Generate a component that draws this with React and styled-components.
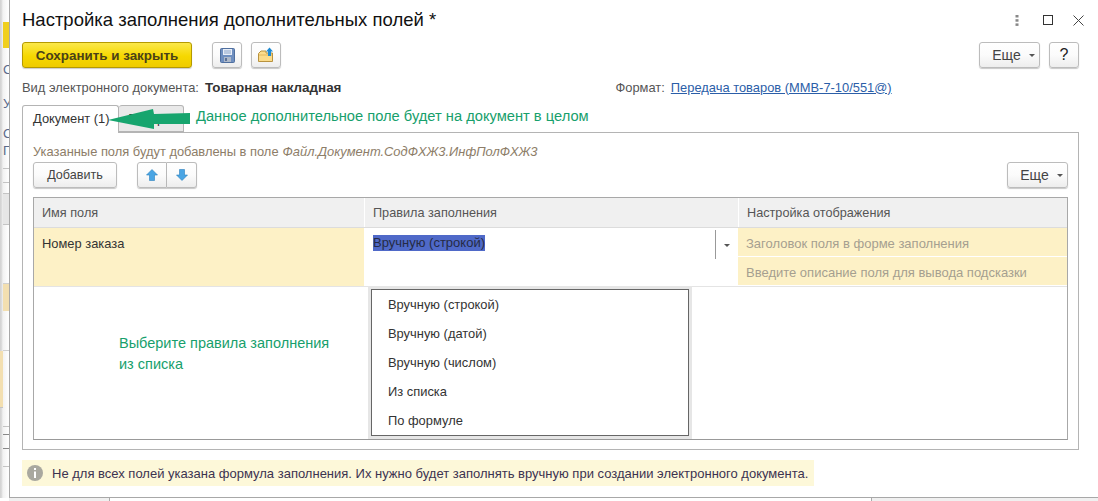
import React from "react";
import styled, { createGlobalStyle } from "styled-components";

const GlobalStyle = createGlobalStyle`
  html, body {
    margin: 0;
    padding: 0;
    background: #fff;
    overflow: hidden;
  }
  body {
    font-family: "Liberation Sans", Arial, sans-serif;
    font-size: 13px;
    color: #333;
  }
`;

const Page = styled.div`
  width: 1098px;
  height: 501px;
  display: flex;
  overflow: hidden;
  background: #fff;
`;

const Backdrop = styled.div`
  width: 9px;
  height: 498px;
  flex: none;
  overflow: hidden;
  background: linear-gradient(90deg, #d4d4d4 0, #d4d4d4 1px, #f2f2f2 3px, #fff 100%);
  display: flex;
  flex-direction: column;
`;

const BackdropBand = styled.div`
  height: ${(p) => p.$h}px;
  flex: none;
  box-sizing: border-box;
  margin-left: ${(p) => p.$ml ?? 3}px;
  margin-right: ${(p) => p.$mr ?? 0}px;
  background: ${(p) => p.$bg || "transparent"};
  border-bottom: ${(p) => (p.$line ? `1px solid ${p.$line}` : "none")};
  font-size: 13px;
  line-height: ${(p) => p.$h}px;
  color: #5a6a8a;
  overflow: hidden;
  white-space: nowrap;
`;

const Column = styled.div`
  flex: 1;
  display: flex;
  flex-direction: column;
  min-width: 0;
`;

const Window = styled.div`
  height: 498px;
  box-sizing: border-box;
  flex: none;
  background: #fff;
  border-left: 1px solid #a8a8a8;
  border-bottom: 1px solid #a8a8a8;
  padding: 0 19px 0 12px;
  display: flex;
  flex-direction: column;
  position: relative;
`;

const BottomStrip = styled.div`
  flex: 1;
  display: flex;
`;

const StripCell = styled.div`
  width: ${(p) => p.$w}px;
  flex: ${(p) => (p.$w ? "none" : 1)};
  background: ${(p) => p.$bg};
  border-right: ${(p) => (p.$w ? "1px solid #aaa" : "none")};
`;

const TitleBar = styled.div`
  height: 42px;
  display: flex;
  align-items: center;
  justify-content: space-between;
  flex: none;
  box-sizing: border-box;
  padding-bottom: 2px;
`;

const Title = styled.h1`
  margin: 0;
  font-size: 18.5px;
  font-weight: normal;
  color: #111;
  white-space: nowrap;
`;

const WindowControls = styled.div`
  display: flex;
  align-items: center;
  gap: 20px;
  margin-right: -5px;
`;

const DotsSlot = styled.span`
  display: flex;
  margin-right: 4px;
`;

const Toolbar = styled.div`
  display: flex;
  align-items: center;
  height: 26px;
  flex: none;
`;

const PrimaryButton = styled.button`
  width: 170px;
  height: 26px;
  box-sizing: border-box;
  border: 1px solid #b59a00;
  border-radius: 3px;
  background: linear-gradient(180deg, #fbe84a 0%, #f6d800 55%, #efcb00 100%);
  box-shadow: 0 1px 1px rgba(0, 0, 0, 0.2);
  color: #4a4118;
  font: bold 13.4px "Liberation Sans", Arial, sans-serif;
  padding: 0;
`;

const Button = styled.button`
  width: ${(p) => p.$w}px;
  height: 26px;
  box-sizing: border-box;
  flex: none;
  margin-left: ${(p) => p.$ml || 0}px;
  border: 1px solid #bcbcbc;
  border-radius: 3px;
  background: linear-gradient(180deg, #fff 0%, #fbfbfb 50%, #ededed 100%);
  box-shadow: 0 1px 1px rgba(0, 0, 0, 0.22);
  color: #444;
  font: 12.6px "Liberation Sans", Arial, sans-serif;
  padding: 0;
  display: flex;
  align-items: center;
  justify-content: center;
`;

const MoreButton = styled(Button)`
  font-size: 14px;
  padding-left: 8px;
  gap: 8px;
`;

const HelpButton = styled(Button)`
  font-size: 16px;
  color: #222;
`;

const Caret = styled.span`
  width: 0;
  height: 0;
  border-left: 3px solid transparent;
  border-right: 3px solid transparent;
  border-top: 3px solid #555;
  margin-top: 1px;
`;

const Spacer = styled.div`
  flex: 1;
`;

const InfoRow = styled.div`
  height: 37px;
  flex: none;
  display: flex;
  align-items: center;
  font-size: 12.9px;
  color: #555;
  padding-top: 1px;
  box-sizing: border-box;
  white-space: nowrap;
`;

const InfoValue = styled.b`
  color: #333;
  margin-left: 6px;
  font-size: 13.4px;
`;

const FormatBlock = styled.div`
  margin-left: 274px;
  display: flex;
  gap: 6px;
`;

const FormatLink = styled.a`
  color: #2b5ea8;
  text-decoration: underline;
`;

const TabStrip = styled.div`
  display: flex;
  height: 27px;
  flex: none;
  position: relative;
`;

const Tab = styled.div`
  width: ${(p) => p.$w}px;
  box-sizing: border-box;
  height: ${(p) => (p.$active ? 28 : 27)}px;
  border: 1px solid #b4b4b4;
  border-bottom: ${(p) => (p.$active ? "none" : "1px solid #b4b4b4")};
  border-left: ${(p) => (p.$active ? "1px solid #b4b4b4" : "none")};
  border-radius: 3px 3px 0 0;
  background: ${(p) => (p.$active ? "#fff" : "#e9e9e9")};
  padding: 5px 0 0 10px;
  font-size: 12.9px;
  color: #333;
  white-space: nowrap;
  overflow: hidden;
  z-index: ${(p) => (p.$active ? 1 : 0)};
`;

const Panel = styled.div`
  height: 318px;
  box-sizing: border-box;
  flex: none;
  border: 1px solid #b4b4b4;
  padding: 0 10px 9px 10px;
  display: flex;
  flex-direction: column;
  position: relative;
`;

const HintText = styled.div`
  height: 29px;
  flex: none;
  display: flex;
  align-items: center;
  gap: 4px;
  font-size: 12.9px;
  color: #8d7d68;
  white-space: nowrap;
  padding-top: 7px;
  box-sizing: border-box;
`;

const HintCode = styled.i`
  font-style: italic;
`;

const PanelToolbar = styled.div`
  display: flex;
  height: 26px;
  flex: none;
  align-items: center;
`;

const ArrowGroup = styled.div`
  display: flex;
  margin-left: 20px;
  height: 26px;
`;

const ArrowButton = styled(Button)`
  border-radius: ${(p) => (p.$first ? "3px 0 0 3px" : "0 3px 3px 0")};
  border-left: ${(p) => (p.$first ? "1px solid #bcbcbc" : "none")};
`;

const Table = styled.div`
  margin-top: 9px;
  flex: 1;
  border: 1px solid #a8a8a8;
  border-bottom-color: #999;
  display: flex;
  flex-direction: column;
`;

const HeaderRow = styled.div`
  display: grid;
  grid-template-columns: 330px 373px 1fr;
  height: 30px;
  flex: none;
  border-bottom: 1px solid #dcdcdc;
  box-sizing: border-box;
  gap: 1px;
  background: #fff;
`;

const HeaderCell = styled.div`
  background: #f0f0f0;
  display: flex;
  align-items: center;
  padding-left: 8px;
  font-size: 12.7px;
  color: #555;
`;

const DataRow = styled.div`
  display: grid;
  grid-template-columns: 330px 373px 1fr;
  height: 59px;
  flex: none;
  border-bottom: 1px solid #e4e4e4;
  box-sizing: border-box;
`;

const NameCell = styled.div`
  background: #fdf1c6;
  padding: 8px 0 0 8px;
  font-size: 12.9px;
  color: #333;
`;

const RuleCell = styled.div`
  display: flex;
  padding: 0 0 0 9px;
  height: 31px;
  position: relative;
`;

const SelectedText = styled.span`
  background: #4f69c8;
  color: #252b45;
  height: 16px;
  line-height: 16px;
  margin-top: 7px;
`;

const ComboButton = styled.div`
  position: absolute;
  right: 0;
  top: 2px;
  width: 22px;
  height: 29px;
  box-sizing: border-box;
  border-left: 1px solid #999;
  display: flex;
  align-items: center;
  justify-content: center;
`;

const DisplayCell = styled.div`
  display: flex;
  flex-direction: column;
  gap: 1px;
  margin-left: 1px;
  margin-bottom: 1px;
`;

const DisplayLine = styled.div`
  flex: 1;
  background: #fdf1c6;
  display: flex;
  align-items: center;
  padding: 3px 0 0 8px;
  color: #a59f90;
`;

const Popup = styled.ul`
  position: absolute;
  left: 348px;
  top: 156px;
  width: 318px;
  height: 147px;
  box-sizing: border-box;
  margin: 0;
  padding: 0;
  list-style: none;
  background: #fff;
  border: 1px solid #666;
  box-shadow: 0 0 0 3px #e6e6e6;
`;

const PopupItem = styled.li`
  height: 29px;
  padding-left: 16px;
  display: flex;
  align-items: center;
  font-size: 12.9px;
  color: #333;
`;

const Note = styled.div`
  position: absolute;
  left: ${(p) => p.$x}px;
  top: ${(p) => p.$y}px;
  color: #17a06c;
  font-size: ${(p) => p.$size}px;
  line-height: 21px;
  white-space: nowrap;
  z-index: 3;
`;

const ArrowMark = styled.svg`
  position: absolute;
  left: 86px;
  top: 3px;
  z-index: 2;
`;

const NoticeRow = styled.div`
  margin-top: 10px;
  align-self: flex-start;
  width: 792px;
  height: 26px;
  box-sizing: border-box;
  flex: none;
  background: #fdf8d9;
  display: flex;
  align-items: center;
  padding-left: 5px;
  gap: 9px;
  color: #3c3350;
  white-space: nowrap;
`;

const DotsIcon = () => (
  <svg width="4" height="11" viewBox="0 0 4 11">
    <rect x="0.5" y="0" width="3" height="2.5" fill="#888" />
    <rect x="0.5" y="4.2" width="3" height="2.5" fill="#888" />
    <rect x="0.5" y="8.4" width="3" height="2.5" fill="#888" />
  </svg>
);

const MaximizeIcon = () => (
  <svg width="10" height="10" viewBox="0 0 10 10">
    <rect x="0.5" y="0.5" width="9" height="9" fill="none" stroke="#333" />
  </svg>
);

const CloseIcon = () => (
  <svg width="11" height="11" viewBox="0 0 11 11">
    <path d="M0.5 0.5 L10.5 10.5 M10.5 0.5 L0.5 10.5" stroke="#444" fill="none" />
  </svg>
);

const SaveIcon = () => (
  <svg width="15" height="15" viewBox="0 0 15 15">
    <rect x="0.5" y="0.5" width="14" height="14" rx="1" fill="#6f8fc0" stroke="#4f6f9f" />
    <rect x="3" y="1" width="9" height="6" fill="#e8eef7" />
    <path d="M4 3h7M4 5h7" stroke="#8aa3c9" />
    <rect x="4" y="9" width="7" height="5" fill="#aeb9c9" />
    <rect x="5" y="10" width="2" height="3" fill="#5c7299" />
  </svg>
);

const FolderIcon = () => (
  <svg width="16" height="16" viewBox="0 0 16 16">
    <path d="M0.5 6.5 L3 4 H8 V6 H14.5 V14.5 H0.5 Z" fill="#fbdc8b" stroke="#b8923f" />
    <path d="M1 8 H14" stroke="#e4b95c" />
    <path d="M11.5 0.5 L15 4.5 H13 V9 H10 V4.5 H8 Z" fill="#1e8ad2" />
  </svg>
);

const UpIcon = () => (
  <svg width="12" height="12" viewBox="0 0 12 12">
    <path d="M6 0.5 L11.5 6 H8.5 V11.5 H3.5 V6 H0.5 Z" fill="#4aa5e4" stroke="#2a80bd" strokeWidth="0.6" />
  </svg>
);

const DownIcon = () => (
  <svg width="12" height="12" viewBox="0 0 12 12">
    <path d="M6 11.5 L11.5 6 H8.5 V0.5 H3.5 V6 H0.5 Z" fill="#4aa5e4" stroke="#2a80bd" strokeWidth="0.6" />
  </svg>
);

const InfoIcon = () => (
  <svg width="16" height="16" viewBox="0 0 16 16">
    <circle cx="8" cy="8" r="8" fill="#a9a89f" />
    <rect x="7" y="3" width="2" height="2" fill="#fff" />
    <rect x="7" y="6.5" width="2" height="6.5" fill="#fff" />
  </svg>
);

const rules = ["Вручную (строкой)", "Вручную (датой)", "Вручную (числом)", "Из списка", "По формуле"];

// куски окна за диалогом, видимые слева
const bands = [
  { h: 22 },
  { h: 26, bg: "#f0cf1e" },
  { h: 15 },
  { h: 14, text: "С" },
  { h: 20 },
  { h: 14, text: "У" },
  { h: 16 },
  { h: 14, text: "С" },
  { h: 3 },
  { h: 14, text: "П" },
  { h: 11, line: "#c4c4c4" },
  { h: 14, line: "#c4c4c4" },
  { h: 11, line: "#c4c4c4" },
  { h: 31, bg: "#e6e6e6", line: "#c4c4c4" },
  { h: 59, line: "#d0d0d0" },
  { h: 27, bg: "#f3dfb0" },
  { h: 40, line: "#d0d0d0" },
  { h: 57, bg: "#f3dfb0", ml: 0, mr: 6, line: "#c4c4c4" },
  { h: 19, line: "#c4c4c4" },
  { h: 8, line: "#888" },
  { h: 14, line: "#888" },
  { h: 18, line: "#c4c4c4" },
];

export default function App() {
  return (
    <Page>
      <GlobalStyle />
      <Backdrop>
        {bands.map((b, i) => (
          <BackdropBand key={i} $h={b.h} $bg={b.bg} $line={b.line} $ml={b.ml} $mr={b.mr}>
            {b.text}
          </BackdropBand>
        ))}
      </Backdrop>
      <Column>
        <Window>
          <TitleBar>
            <Title>Настройка заполнения дополнительных полей *</Title>
            <WindowControls>
              <DotsSlot>
                <DotsIcon />
              </DotsSlot>
              <MaximizeIcon />
              <CloseIcon />
            </WindowControls>
          </TitleBar>

          <Toolbar>
            <PrimaryButton>Сохранить и закрыть</PrimaryButton>
            <Button $w={30} $ml={20}>
              <SaveIcon />
            </Button>
            <Button $w={30} $ml={9}>
              <FolderIcon />
            </Button>
            <Spacer />
            <MoreButton $w={61}>
              Еще <Caret />
            </MoreButton>
            <HelpButton $w={30} $ml={9}>
              ?
            </HelpButton>
          </Toolbar>

          <InfoRow>
            Вид электронного документа:
            <InfoValue>Товарная накладная</InfoValue>
            <FormatBlock>
              Формат:
              <FormatLink>Передача товаров (ММВ-7-10/551@)</FormatLink>
            </FormatBlock>
          </InfoRow>

          <TabStrip>
            <Tab $active $w={97}>
              Документ (1)
            </Tab>
            <Tab $w={65}>Товары</Tab>
            <ArrowMark width="84" height="24" viewBox="0 0 84 24">
              <path d="M0 12 L45 1 L46 6 L82 5 L82 16 L46 16 L46 21 Z" fill="#17a56e" />
            </ArrowMark>
            <Note $x={174} $y={1} $size={14.7}>
              Данное дополнительное поле будет на документ в целом
            </Note>
          </TabStrip>

          <Panel>
            <HintText>
              Указанные поля будут добавлены в поле
              <HintCode>Файл.Документ.СодФХЖ3.ИнфПолФХЖ3</HintCode>
            </HintText>
            <PanelToolbar>
              <Button $w={84}>Добавить</Button>
              <ArrowGroup>
                <ArrowButton $w={30} $first>
                  <UpIcon />
                </ArrowButton>
                <ArrowButton $w={30}>
                  <DownIcon />
                </ArrowButton>
              </ArrowGroup>
              <Spacer />
              <MoreButton $w={61}>
                Еще <Caret />
              </MoreButton>
            </PanelToolbar>
            <Table>
              <HeaderRow>
                <HeaderCell>Имя поля</HeaderCell>
                <HeaderCell>Правила заполнения</HeaderCell>
                <HeaderCell>Настройка отображения</HeaderCell>
              </HeaderRow>
              <DataRow>
                <NameCell>Номер заказа</NameCell>
                <RuleCell>
                  <SelectedText>Вручную (строкой)</SelectedText>
                  <ComboButton>
                    <Caret />
                  </ComboButton>
                </RuleCell>
                <DisplayCell>
                  <DisplayLine>Заголовок поля в форме заполнения</DisplayLine>
                  <DisplayLine>Введите описание поля для вывода подсказки</DisplayLine>
                </DisplayCell>
              </DataRow>
            </Table>
            <Popup>
              {rules.map((r) => (
                <PopupItem key={r}>{r}</PopupItem>
              ))}
            </Popup>
            <Note $x={96} $y={200} $size={14.5}>
              Выберите правила заполнения
              <br />
              из списка
            </Note>
          </Panel>

          <NoticeRow>
            <InfoIcon />
            Не для всех полей указана формула заполнения. Их нужно будет заполнять вручную при создании электронного
            документа.
          </NoticeRow>
        </Window>
        <BottomStrip>
          <StripCell $w={100} $bg="#f0f0f0" />
          <StripCell $w={761} $bg="#fff" />
          <StripCell $bg="#f0f0f0" />
        </BottomStrip>
      </Column>
    </Page>
  );
}
